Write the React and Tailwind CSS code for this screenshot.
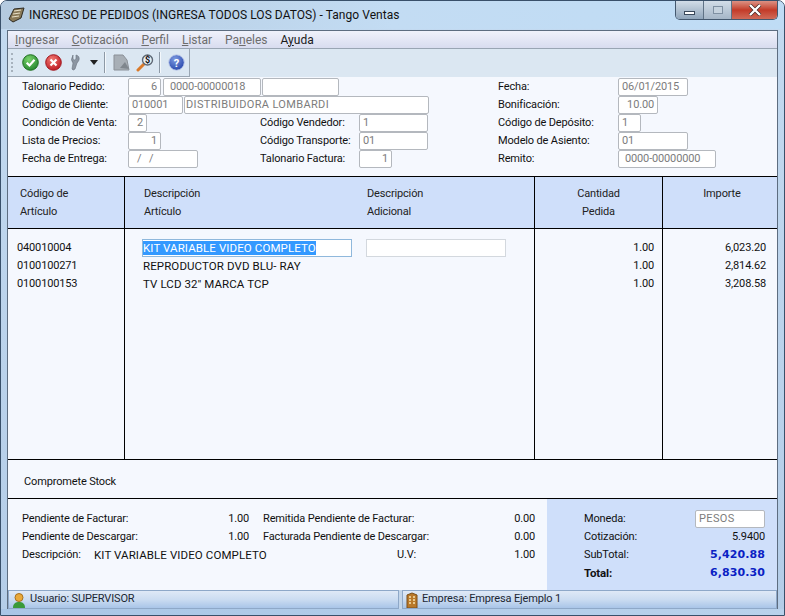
import { useId } from "react";

// read-only box used all over the form
function Box({ w, right, children, className = "" }) {
  return (
    <div
      style={{ width: w }}
      className={`h-[18px] shrink-0 truncate rounded-[2px] border border-[#b4b8be] bg-white px-[3px] leading-[16px] text-[#7c7c7c] ${right ? "text-right" : ""} ${className}`}
    >
      {children}
    </div>
  );
}

function Label({ w, children }) {
  return <div style={{ width: w }} className="shrink-0 truncate leading-[18px] text-[#111]">{children}</div>;
}

function Sep() {
  return <div className="h-[21px] w-px shrink-0 bg-[#8d99a6] shadow-[1px_0_0_#f4f8fc]" />;
}

function MenuItem({ children, dark }) {
  return <span className={dark ? "text-[#1b1b1b]" : "text-[#6d6d6d]"}>{children}</span>;
}

function Status({ className = "", icon, children }) {
  return (
    <div className={`flex h-[19px] items-center gap-[3px] border border-[#8ea8c8] bg-gradient-to-b from-[#dfe9f6] via-[#cbdcf1] to-[#a9c5e8] pl-[2px] text-[#1d2733] ${className}`}>
      {icon}
      <span>{children}</span>
    </div>
  );
}

function Ball({ from, to, edge, className, children }) {
  const id = useId();
  return (
    <svg className={className} width="17" height="17" viewBox="0 0 17 17">
      <defs>
        <radialGradient id={id} cx="0.4" cy="0.3" r="0.8">
          <stop offset="0" stopColor={from} />
          <stop offset="1" stopColor={to} />
        </radialGradient>
      </defs>
      <circle cx="8.5" cy="8.5" r="7.8" fill={`url(#${id})`} stroke={edge} />
      {children}
    </svg>
  );
}

const rows = [
  { code: "040010004", desc: "KIT VARIABLE VIDEO COMPLETO", qty: "1.00", amount: "6,023.20", active: true },
  { code: "0100100271", desc: "REPRODUCTOR DVD BLU- RAY", qty: "1.00", amount: "2,814.62" },
  { code: "0100100153", desc: "TV LCD 32'' MARCA TCP", qty: "1.00", amount: "3,208.58" },
];

export default function App() {
  return (
    <div className="flex h-[616px] w-[785px] flex-col overflow-hidden rounded-t-[7px] border border-[#39506a] bg-gradient-to-b from-[#c3daf0] to-[#b4cde8] font-['Roboto',sans-serif] text-[11px] tracking-[-0.15px] text-[#111]">
      {/* title bar */}
      <div className="flex h-[28px] shrink-0 items-start bg-gradient-to-r from-[#b4cadf] via-[#c3dcf3] to-[#bfdcf5]">
        <div className="flex h-[28px] flex-1 items-center gap-[3px] pl-[7px]">
          <svg width="18" height="18" viewBox="0 0 18 18">
            <path d="M1 13 L6 3 L16 2 L13 12 L5 16 Z" fill="#8a7a58" stroke="#2e2a20" strokeWidth="1" />
            <path d="M6 5 L13 4 M5 8 L12 7 M4 11 L11 10" stroke="#e8e0c8" strokeWidth="1.2" />
          </svg>
          <span className="text-[12px] tracking-[0.05px] text-[#111]">INGRESO DE PEDIDOS (INGRESA TODOS LOS DATOS) - Tango Ventas</span>
        </div>
        <div className="mr-[6px] flex h-[19px] overflow-hidden rounded-b-[5px] border border-t-0 border-[#44586e]">
          <div className="flex w-[28px] items-end justify-center border-r border-[#5f7285] bg-gradient-to-b from-[#d2dde8] to-[#90a5ba] pb-[4px]">
            <div className="h-[4px] w-[11px] border border-[#39485a] bg-white" />
          </div>
          <div className="flex w-[28px] items-center justify-center border-r border-[#5f7285] bg-gradient-to-b from-[#d2dde8] to-[#a5b6c7]">
            <div className="h-[8px] w-[10px] border border-[#7f90a2] bg-[#c5d2de]" />
          </div>
          <div className="flex w-[45px] items-center justify-center bg-gradient-to-b from-[#dc9184] via-[#c33a28] to-[#d06a58]">
            <svg width="14" height="12" viewBox="0 0 14 12">
              <path d="M2 1 L12 11 M12 1 L2 11" stroke="#3b2522" strokeWidth="3.6" />
              <path d="M2 1 L12 11 M12 1 L2 11" stroke="#fff" strokeWidth="2.4" />
            </svg>
          </div>
        </div>
      </div>

      {/* client area */}
      <div className="mx-[6px] mt-px flex min-h-0 flex-1 flex-col border border-b-0 border-[#5d6d80] bg-[#f5f8fe]">
        {/* menu */}
        <div className="flex h-[18px] shrink-0 items-center gap-[13px] border-b border-[#99a5b3] bg-gradient-to-b from-[#f0f2fb] to-[#d8dcef] pl-[7px] text-[12px] tracking-normal">
          <MenuItem><u>I</u>ngresar</MenuItem>
          <MenuItem><u>C</u>otización</MenuItem>
          <MenuItem><u>P</u>erfil</MenuItem>
          <MenuItem><u>L</u>istar</MenuItem>
          <MenuItem>Pa<u>n</u>eles</MenuItem>
          <MenuItem dark>A<u>y</u>uda</MenuItem>
        </div>

        {/* toolbar */}
        <div className="h-[28px] shrink-0 bg-[#dbe7f2]">
          <div className="flex h-[28px] w-[182px] items-center border-r border-b border-[#9aa6b3] pl-[3px]">
            <div className="h-[19px] w-[3px] border-l-2 border-dotted border-[#a7b2bd]" />
            <Ball className="ml-[8px]" from="#7bd46b" to="#1c7f2a" edge="#1f6f1f">
              <path d="M4.7 8.7 L7.5 11.5 L12.5 5.8" fill="none" stroke="#fff" strokeWidth="2.2" />
            </Ball>
            <Ball className="ml-[6px]" from="#f27a72" to="#b8121c" edge="#a11820">
              <path d="M5.5 5.5 L11.5 11.5 M11.5 5.5 L5.5 11.5" stroke="#fff" strokeWidth="2.2" />
            </Ball>
            <svg className="ml-[7px]" width="14" height="17" viewBox="0 0 14 17">
              <path d="M4 1 L4 5 Q5 7 7 5 L7 1 Q11 2 10 6 Q9 8 8 9 L6 15 Q4 17 3 15 L4 9 Q1 6 4 1 Z" fill="#8c96a2" stroke="#69727d" strokeWidth="0.6" />
            </svg>
            <svg className="ml-[7px]" width="8" height="5" viewBox="0 0 8 5"><path d="M0 0 H8 L4 5 Z" fill="#222" /></svg>
            <div className="ml-[6px]"><Sep /></div>
            <svg className="ml-[8px]" width="17" height="17" viewBox="0 0 17 17">
              <path d="M1 16 V1 H10 L14 6 L16 16 Z" fill="#a8afb6" stroke="#8a9097" />
              <path d="M7 14 L12 8 L16 15 Z" fill="#7f868d" />
            </svg>
            <svg className="ml-[6px]" width="18" height="18" viewBox="0 0 18 18">
              <path d="M2 16 L8 10" stroke="#d97a2b" strokeWidth="3" strokeLinecap="round" />
              <circle cx="11.5" cy="6" r="5" fill="#e8eef5" stroke="#5d6875" strokeWidth="1.4" />
              <text x="11.5" y="9.2" fontSize="9" fontWeight="700" textAnchor="middle" fill="#111">$</text>
            </svg>
            <div className="ml-[5px]"><Sep /></div>
            <Ball className="ml-[8px]" from="#7d9ae0" to="#1f3fa8" edge="#c7d3ec">
              <text x="8.5" y="12.5" fontSize="11" fontWeight="700" textAnchor="middle" fill="#fff">?</text>
            </Ball>
          </div>
        </div>

        {/* header form */}
        <div className="flex h-[99px] shrink-0 pt-px">
          <div className="w-[490px] shrink-0 pl-[14px]">
            <div className="flex">
              <Label w={106}>Talonario Pedido:</Label>
              <Box w={33} right>6</Box>
              <Box w={98} className="ml-[2px] pl-[6px]">0000-00000018</Box>
              <Box w={77} className="ml-px" />
            </div>
            <div className="flex">
              <Label w={106}>Código de Cliente:</Label>
              <Box w={55}>010001</Box>
              <Box w={245} className="ml-px pl-[1px] tracking-[0.35px]">DISTRIBUIDORA LOMBARDI</Box>
            </div>
            <div className="flex">
              <Label w={106}>Condición de Venta:</Label>
              <Box w={19} right>2</Box>
              <div className="ml-[113px]"><Label w={99}>Código Vendedor:</Label></div>
              <Box w={69}>1</Box>
            </div>
            <div className="flex">
              <Label w={106}>Lista de Precios:</Label>
              <Box w={33} right>1</Box>
              <div className="ml-[99px]"><Label w={99}>Código Transporte:</Label></div>
              <Box w={69}>01</Box>
            </div>
            <div className="flex">
              <Label w={106}>Fecha de Entrega:</Label>
              <Box w={70} className="whitespace-pre pl-[8px]">/   /</Box>
              <div className="ml-[62px]"><Label w={99}>Talonario Factura:</Label></div>
              <Box w={33} right>1</Box>
            </div>
          </div>
          <div className="flex-1">
            <div className="flex"><Label w={120}>Fecha:</Label><Box w={70}>06/01/2015</Box></div>
            <div className="flex"><Label w={120}>Bonificación:</Label><Box w={40} right>10.00</Box></div>
            <div className="flex"><Label w={120}>Código de Depósito:</Label><Box w={23}>1</Box></div>
            <div className="flex"><Label w={120}>Modelo de Asiento:</Label><Box w={70}>01</Box></div>
            <div className="flex"><Label w={120}>Remito:</Label><Box w={98} className="pl-[6px]">0000-00000000</Box></div>
          </div>
        </div>

        {/* detail grid */}
        <div className="grid h-[53px] shrink-0 grid-cols-[117px_410px_128px_1fr] border-y border-black bg-[#cfdffa] leading-[18px] text-[#222]">
          <div className="border-r border-black pl-[12px] pt-[8px]">Código de<br />Artículo</div>
          <div className="flex border-r border-black pt-[8px]">
            <div className="w-[242px] pl-[19px]">Descripción<br />Artículo</div>
            <div>Descripción<br />Adicional</div>
          </div>
          <div className="border-r border-black pt-[8px] text-center">Cantidad<br />Pedida</div>
          <div className="pl-[4px] pt-[8px] text-center">Importe</div>
        </div>
        <div className="grid h-[231px] shrink-0 grid-cols-[117px_410px_128px_1fr] border-b border-black leading-[18px] text-[#111]">
          <div className="border-r border-black pl-[9px] pt-[10px]">
            {rows.map((r) => <div key={r.code}>{r.code}</div>)}
          </div>
          <div className="border-r border-black pl-[18px] pt-[10px] text-[11.5px] tracking-[0.1px]">
            {rows.map((r) => r.active ? (
              <div key={r.code} className="-ml-px flex h-[18px] gap-[14px]">
                <div className="h-[18px] w-[210px] border border-[#8fb8dc] bg-white leading-[16px]">
                  <span className="bg-[#3399ff] text-white">{r.desc}</span>
                </div>
                <div className="h-[18px] w-[140px] border border-[#d3d8de] bg-white" />
              </div>
            ) : <div key={r.code}>{r.desc}</div>)}
          </div>
          <div className="border-r border-black pr-[8px] pt-[10px] text-right">
            {rows.map((r) => <div key={r.code}>{r.qty}</div>)}
          </div>
          <div className="pr-[11px] pt-[10px] text-right">
            {rows.map((r) => <div key={r.code}>{r.amount}</div>)}
          </div>
        </div>

        <div className="flex h-[39px] shrink-0 items-center border-b border-black pl-[16px] pt-[6px]">Compromete Stock</div>

        {/* totals */}
        <div className="flex min-h-0 flex-1 leading-[18px]">
          <div className="w-[539px] shrink-0 pl-[14px] pt-[11px]">
            <div className="flex">
              <div className="w-[180px]">Pendiente de Facturar:</div>
              <div className="w-[47px] text-right">1.00</div>
              <div className="ml-[14px] w-[210px]">Remitida Pendiente de Facturar:</div>
              <div className="w-[62px] text-right">0.00</div>
            </div>
            <div className="flex">
              <div className="w-[180px]">Pendiente de Descargar:</div>
              <div className="w-[47px] text-right">1.00</div>
              <div className="ml-[14px] w-[210px]">Facturada Pendiente de Descargar:</div>
              <div className="w-[62px] text-right">0.00</div>
            </div>
            <div className="flex">
              <div className="w-[72px]">Descripción:</div>
              <div className="w-[303px] text-[11.5px] tracking-[0.1px]">KIT VARIABLE VIDEO COMPLETO</div>
              <div className="w-[76px]">U.V:</div>
              <div className="w-[62px] text-right">1.00</div>
            </div>
          </div>
          <div className="flex-1 bg-[#cfdffa] pl-[37px] pr-[12px] pt-[11px]">
            <div className="flex justify-between"><span>Moneda:</span><Box w={70} className="tracking-[0.35px]">PESOS</Box></div>
            <div className="flex justify-between"><span>Cotización:</span><span>5.9400</span></div>
            <div className="flex justify-between"><span>SubTotal:</span><span className="font-['DejaVu_Sans',sans-serif] text-[11px] font-bold tracking-[0.1px] text-[#0b1fc4]">5,420.88</span></div>
            <div className="flex justify-between font-bold"><span className="text-[11.5px]">Total:</span><span className="font-['DejaVu_Sans',sans-serif] text-[11px] tracking-[0.1px] text-[#0b1fc4]">6,830.30</span></div>
          </div>
        </div>

        {/* status bar */}
        <div className="flex shrink-0 gap-[3px] bg-[#c4d6ea]">
          <Status
            className="w-[391px]"
            icon={
              <svg width="16" height="16" viewBox="0 0 16 16">
                <path d="M2 16 C2 11 5 10 8 10 C11 10 14 11 14 16 Z" fill="#3a9a3a" />
                <circle cx="8" cy="5.5" r="4" fill="#e9a93a" stroke="#a8701c" />
              </svg>
            }
          >
            Usuario: SUPERVISOR
          </Status>
          <Status
            className="flex-1"
            icon={
              <svg width="14" height="16" viewBox="0 0 14 16">
                <path d="M2 16 V3 L7 1 L12 3 V16 Z" fill="#b9792a" stroke="#7c4f18" />
                <path d="M4 5 H6 M8 5 H10 M4 8 H6 M8 8 H10 M4 11 H6 M8 11 H10" stroke="#f6e2b0" strokeWidth="1.4" />
              </svg>
            }
          >
            Empresa: Empresa Ejemplo 1
          </Status>
        </div>
      </div>
      <div className="h-[6px] shrink-0 bg-gradient-to-r from-[#a9c6e6] to-[#b9d2ec]" />
    </div>
  );
}
